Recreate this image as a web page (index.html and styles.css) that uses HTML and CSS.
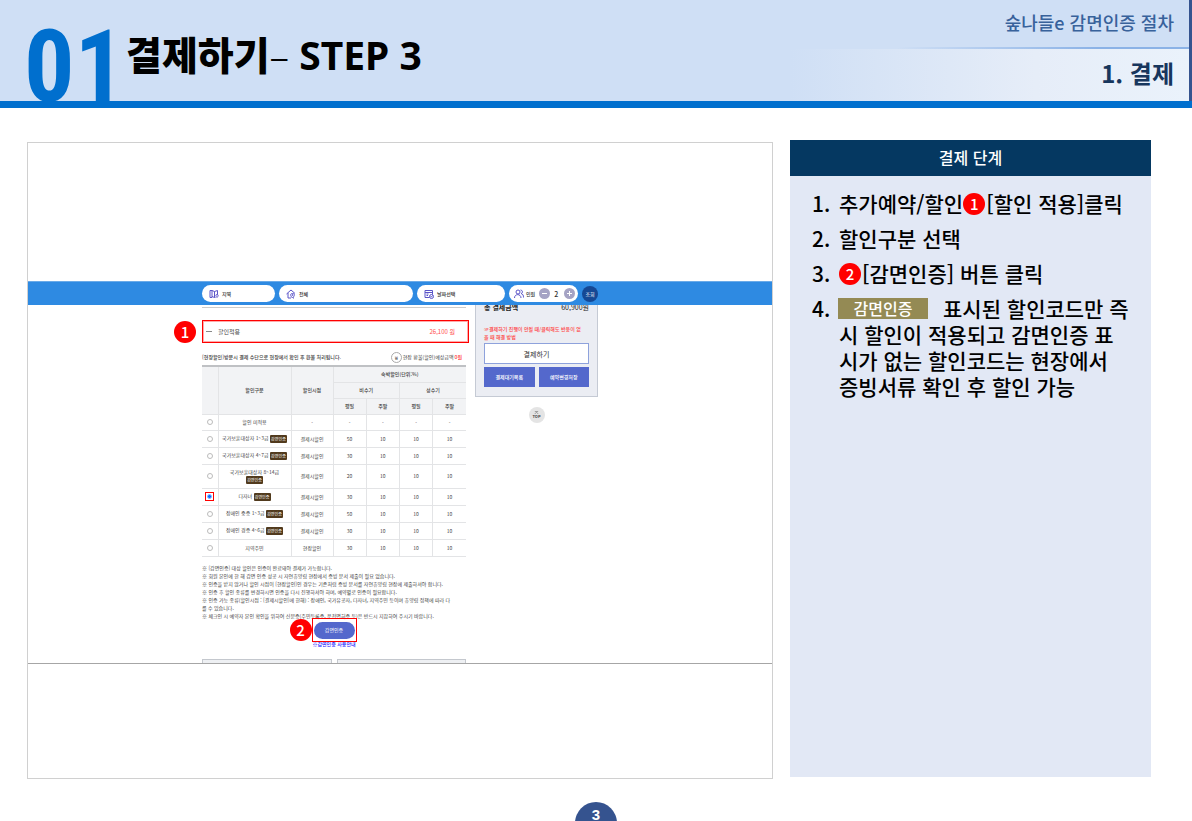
FILE: index.html
```html
<!DOCTYPE html>
<html lang="ko">
<head>
<meta charset="utf-8">
<meta name="viewport" content="width=device-width, initial-scale=1">
<title>결제하기 – STEP 3</title>
<link rel="stylesheet" href="styles.css">
</head>
<body>
<header class="header">
  <div class="chapter">01</div>
  <h1 class="title">결제하기<span class="title-step"><span class="title-dash">–</span> STEP 3</span></h1>
  <div class="crumbs">
    <p class="crumb-doc">숲나들e 감면인증 절차</p>
    <p class="crumb-section">1. 결제</p>
  </div>
</header>

<main class="main">
  <section class="frame" aria-label="결제 화면">
    <div class="site">
      <div class="search">
        <button class="pill" type="button">
          <svg class="ico" viewBox="0 0 20 20"><path d="M2 3h4v14H2zM6 3l5 2v12l-5-2M11 5l6-2v8M11 17h2"/><path d="M16 11c3 0 3 3 0 6-3-3-3-6 0-6z"/></svg>지역
        </button>
        <button class="pill" type="button">
          <svg class="ico" viewBox="0 0 20 20"><path d="M1 10l9-8 8 7M4 8v10h6M14 18h2"/><path d="M13 9c5 0 5 4 0 9-5-5-5-9 0-9z"/><circle cx="13" cy="12" r="1"/></svg>전체
        </button>
        <button class="pill" type="button">
          <svg class="ico" viewBox="0 0 20 20"><path d="M11 17H2V3h15v8M2 7h15M5 10h4M5 13h3"/><circle cx="15" cy="15" r="4"/><path d="M13 15l2 1 2-3"/></svg>날짜선택
        </button>
        <div class="pill pill-people">
          <svg class="ico" viewBox="0 0 20 20"><circle cx="8" cy="6" r="4"/><path d="M1 18c0-9 13-9 13 0M13 2c5 0 5 7 1 7 4 1 5 4 5 8"/></svg><span>인원</span>
          <button class="step" type="button" aria-label="인원 줄이기"><svg viewBox="0 0 11 11"><path d="M3 5.500h5"/></svg></button>
          <output class="count">2</output>
          <button class="step" type="button" aria-label="인원 늘리기"><svg viewBox="0 0 11 11"><path d="M3 5.500h5M5.500 3v5"/></svg></button>
        </div>
        <button class="go" type="button">조회</button>
      </div>

      <div class="content">
        <div class="left">
          <div class="discount">
            <span class="badge badge-one">1</span>
            <span class="dash"></span><span class="discount-name">할인적용</span>
            <span class="discount-sum">26,100 원</span>
          </div>
          <div class="refund">
            <b>[현장할인]방문시 결제 수단으로 현장에서 확인 후 환불 처리됩니다.</b>
            <span class="refund-sum"><span class="won">₩</span>현장 환불(할인)예상금액 <em>0원</em></span>
          </div>
          <table class="rates">
            <colgroup><col class="c-radio"><col class="c-name"><col class="c-when"><col><col><col><col></colgroup>
            <thead>
              <tr><th rowspan="3"></th><th rowspan="3">할인구분</th><th rowspan="3">할인시점</th><th colspan="4">숙박할인(단위:%)</th></tr>
              <tr><th colspan="2">비수기</th><th colspan="2">성수기</th></tr>
              <tr><th>평일</th><th>주말</th><th>평일</th><th>주말</th></tr>
            </thead>
            <tbody>
              <tr><td><input type="radio" name="rate" id="r1"></td><td><label for="r1">할인 미적용</label></td><td>-</td><td>-</td><td>-</td><td>-</td><td>-</td></tr>
              <tr><td><input type="radio" name="rate" id="r2"></td><td><label for="r2">국가보훈대상자 1~3급 <span class="tag">감면인증</span></label></td><td>결제시할인</td><td>50</td><td>10</td><td>10</td><td>10</td></tr>
              <tr><td><input type="radio" name="rate" id="r3"></td><td><label for="r3">국가보훈대상자 4~7급 <span class="tag">감면인증</span></label></td><td>결제시할인</td><td>30</td><td>10</td><td>10</td><td>10</td></tr>
              <tr class="tall"><td><input type="radio" name="rate" id="r4"></td><td><label for="r4">국가보훈대상자 8~14급<br><span class="tag">감면인증</span></label></td><td>결제시할인</td><td>20</td><td>10</td><td>10</td><td>10</td></tr>
              <tr><td><span class="picked"><input type="radio" name="rate" id="r5" checked></span></td><td><label for="r5">다자녀 <span class="tag">감면인증</span></label></td><td>결제시할인</td><td>30</td><td>10</td><td>10</td><td>10</td></tr>
              <tr><td><input type="radio" name="rate" id="r6"></td><td><label for="r6">장애인 중증 1~3급 <span class="tag">감면인증</span></label></td><td>결제시할인</td><td>50</td><td>10</td><td>10</td><td>10</td></tr>
              <tr><td><input type="radio" name="rate" id="r7"></td><td><label for="r7">장애인 경증 4~6급 <span class="tag">감면인증</span></label></td><td>결제시할인</td><td>30</td><td>10</td><td>10</td><td>10</td></tr>
              <tr><td><input type="radio" name="rate" id="r8"></td><td><label for="r8">지역주민</label></td><td>현장할인</td><td>30</td><td>10</td><td>10</td><td>10</td></tr>
            </tbody>
          </table>
          <div class="notes">
            <p>※ [감면인증] 대상 할인은 인증이 완료돼야 결제가 가능합니다.</p>
            <p>※ 회원 본인에 한 해 감면 인증 성공 시 자연휴양림 현장에서 증빙 문서 제출이 필요 없습니다.</p>
            <p>※ 인증을 받지 않거나 할인 시점이 [현장할인]인 경우는 기존처럼 증빙 문서를 자연휴양림 현장에 제출하셔야 합니다.</p>
            <p>※ 인증 후 할인 종류를 변경하시면 인증을 다시 진행하셔야 하며, 예약별로 인증이 필요합니다.</p>
            <p>※ 인증 가능 종류(할인시점 : [결제시할인]에 한해) : 장애인, 국가유공자, 다자녀, 지역주민 등이며 휴양림 정책에 따라 다<br>를 수 있습니다.</p>
            <p>※ 체크인 시 예약자 본인 확인을 위하여 신분증(주민등록증, 운전면허증 등)은 반드시 지참하여 주시기 바랍니다.</p>
          </div>
          <div class="verify">
            <div class="verify-box">
              <span class="badge badge-two">2</span>
              <button class="verify-btn" type="button">감면인증</button>
            </div>
            <a class="guide" href="#guide">※감면인증 사용안내</a>
          </div>
          <div class="cards"><span></span><span></span></div>
        </div>

        <aside class="aside">
          <div class="pay">
            <div class="total"><b>총 결제금액</b><span>60,900원</span></div>
            <p class="warn">☞결제하기 진행이 안될 때/클릭해도 반응이 없<br>을 때 해결 방법</p>
            <button class="pay-btn" type="button">결제하기</button>
            <div class="pair">
              <button type="button">결제대기목록</button>
              <button type="button">예약변경저장</button>
            </div>
          </div>
          <a class="top" href="#"><svg viewBox="0 0 6 4"><path d="M1 .5h4M1 3.500l2-2 2 2"/></svg>TOP</a>
        </aside>
      </div>
    </div>
  </section>

  <section class="guide-panel">
    <h2 class="panel-head">결제 단계</h2>
    <ol class="steps">
      <li>추가예약/할인<span class="badge">1</span>[할인 적용]클릭</li>
      <li>할인구분 선택</li>
      <li><span class="badge">2</span>[감면인증] 버튼 클릭</li>
      <li><span class="chip">감면인증</span>표시된 할인코드만 즉<br>시 할인이 적용되고 감면인증 표<br>시가 없는 할인코드는 현장에서<br>증빙서류 확인 후 할인 가능</li>
    </ol>
  </section>
</main>

<footer class="footer"><span class="page-no">3</span></footer>
</body>
</html>
```

FILE: styles.css
```css
* { box-sizing: border-box; }

body {
  margin: 0;
  min-height: 100vh;
  display: flex;
  flex-direction: column;
  overflow-x: hidden;
  background: #fff;
  color: #000;
  font-family: "Noto Sans CJK KR", "Noto Sans", sans-serif;
}

h1, h2, p, ol { margin: 0; padding: 0; }
button { font: inherit; padding: 0; border: 0; cursor: pointer; }

/* Header */
.header {
  flex: none;
  display: flex;
  height: 108px;
  border-bottom: 7px solid #006fce;
  background: #cfdff5;
}
.chapter {
  width: 98px;
  padding-left: 24px;
  color: #006fce;
  font: bold 100px/134px "Roboto Condensed", "Open Sans Condensed", "Liberation Sans Narrow", sans-serif;
}
.title {
  padding-left: 28px;
  font-size: 39px;
  line-height: 106px;
  font-weight: 900;
  white-space: nowrap;
}
.title-step { font-family: "Noto Sans", "Open Sans", sans-serif; font-weight: 700; }
.title-dash { font-weight: 300; }
.crumbs {
  flex: 1;
  display: grid;
  grid-template-rows: 49px 1fr;
  text-align: right;
  border-right: 3px solid #35538f;
}
.crumb-doc {
  padding-right: 15px;
  border-bottom: 2px solid;
  border-image: linear-gradient(90deg, transparent 62%, #8bb2e6 88%) 1;
  color: #38629b;
  font-size: 18px;
  line-height: 44px;
  font-weight: 500;
}
.crumb-section {
  padding-right: 15px;
  background: linear-gradient(90deg, #cfdff5 48%, #e6edf8 80%, #eaf2fb);
  color: #17365d;
  font-size: 24px;
  line-height: 48px;
  font-weight: 700;
}

/* Main layout */
.main {
  flex: 1;
  display: grid;
  grid-template-columns: 746fr 361fr;
  gap: 17px;
  padding: 32px 41px 25px 27px;
}
.frame {
  display: flex;
  flex-direction: column;
  margin: 2px 0 -2px;
  border: 1px solid #d0d0d0;
}
.frame::before { content: ""; flex: 139; }
.frame::after { content: ""; flex: 115; }

/* Embedded booking page */
.site {
  border-bottom: 1px solid #a6a6a6;
  color: #444;
  font-size: 5px;
  line-height: 8px;
}
.search {
  display: grid;
  grid-template-columns: 73px 134px 88px 69px 16px;
  gap: 4px;
  align-items: center;
  height: 24px;
  padding-left: 174px;
  border-top: 1px solid #6aaae8;
  background: #2e8ae2;
}
.pill {
  display: flex;
  align-items: center;
  gap: 3px;
  height: 17px;
  padding-left: 7px;
  border-radius: 9px;
  background: #fff;
  color: #333;
  font-weight: 500;
}
.ico {
  width: 10px;
  height: 10px;
  fill: none;
  stroke: #5b54c8;
  stroke-width: 2;
}
.pill-people { padding-left: 5px; gap: 2px; }
.step {
  width: 11px;
  height: 11px;
  margin-left: 2px;
  border-radius: 50%;
  background: #a5a3c4;
}
.step svg { display: block; fill: none; stroke: #fff; }
.count { width: 8px; font-size: 7px; text-align: center; }
.go {
  width: 16px;
  height: 16px;
  border-radius: 50%;
  background: #154894;
  color: #fff;
}

.content {
  display: grid;
  grid-template-columns: 264px 123px;
  gap: 9px;
  padding-left: 174px;
}
.left { padding-top: 1px; border-top: 1px solid #fff; }
.left::before {
  content: "";
  display: block;
  height: 1px;
  margin-bottom: -1px;
  background: #ccc;
}
.discount {
  position: relative;
  display: flex;
  align-items: center;
  height: 23px;
  margin: 13px -3px 0 0;
  padding: 0 13px 0 3px;
  border: 1px solid #f00;
  outline: 1px solid #ff000055;
  outline-offset: -2px;
  font-size: 6px;
}
.dash { width: 6px; height: 1px; margin-right: 6px; background: #888; }
.discount-sum { margin-left: auto; color: #ff4d4d; }
.badge {
  display: inline-flex;
  align-items: center;
  justify-content: center;
  width: 22px;
  height: 22px;
  border-radius: 50%;
  background: #f00;
  color: #fff;
  font-size: 15px;
  line-height: 22px;
  font-weight: 500;
}
.badge-one { position: absolute; left: -29px; top: 0; }
.badge-two { position: absolute; left: -23px; top: 0; }

.refund {
  display: flex;
  align-items: center;
  justify-content: space-between;
  height: 22px;
  padding: 6px 4px 0 0;
  white-space: nowrap;
}
.refund b { font-weight: 500; }
.refund-sum { display: flex; align-items: center; gap: 1px; }
.refund-sum em { color: #f33; font-style: normal; font-weight: 500; }
.won {
  width: 11px;
  height: 11px;
  border: 1px solid #aaa;
  border-radius: 50%;
  line-height: 9px;
  text-align: center;
}

.rates {
  width: 100%;
  table-layout: fixed;
  border-collapse: collapse;
  border-top: 2px solid #bfc1c4;
}
.c-radio { width: 16px; }
.c-name { width: 73px; }
.c-when { width: 42px; }
.rates th, .rates td {
  height: 16px;
  padding: 0;
  border: 1px solid #e3e4e6;
  text-align: center;
  line-height: 8px;
  white-space: nowrap;
}
.rates th { background: #f2f3f5; font-weight: 500; }
.rates td { height: 17px; }
.rates tbody tr:first-child td { height: 16px; }
.rates .tall td { height: 24px; }
.rates tr > :first-child { border-left: 0; }
.rates tr > :last-child { border-right: 0; }
.rates input {
  display: block;
  appearance: none;
  width: 6px;
  height: 6px;
  margin: 0 auto;
  border: 1px solid #bbb;
  border-radius: 50%;
  background: #fff;
}
.rates input:checked { border-color: #8bb8ff; background: #0a6cff; }
.picked {
  display: block;
  width: 9px;
  margin: 0 auto;
  padding: 1px 0;
  border: 1px solid #f00;
}
.picked input { width: 5px; height: 5px; }
.tag {
  display: inline-block;
  width: 17px;
  height: 8px;
  border-radius: 1px;
  background: #513a1d;
  color: #fff;
  font-size: 4px;
  line-height: 8px;
  vertical-align: middle;
}

.notes { padding-top: 7px; white-space: nowrap; }
.verify { display: flex; flex-direction: column; align-items: center; }
.verify-box {
  position: relative;
  margin-top: -2px;
  padding: 3px 1px 2px;
  border: 1px solid #f00;
}
.verify-btn {
  display: block;
  width: 41px;
  height: 17px;
  border-radius: 9px;
  background: #5468cc;
  color: #fff;
}
.guide { margin-top: -2px; color: #22f; text-decoration: none; font-weight: 500; }
.cards { display: grid; grid-template-columns: 1fr 1fr; gap: 5px; margin-top: 11px; }
.cards span { height: 4px; border: 1px solid #c4c8ce; border-bottom: 0; background: #eef0f3; }

.pay {
  height: 92px;
  padding: 0 8px;
  border: 1px solid #c5cad4;
  border-top: 0;
  background: #ebedf3;
}
.total {
  display: flex;
  align-items: flex-end;
  justify-content: space-between;
  height: 6px;
  overflow: hidden;
  color: #222;
  font-size: 7px;
}
.warn { padding-top: 14px; color: #f44; font-weight: 500; white-space: nowrap; }
.pay-btn {
  display: block;
  width: 100%;
  height: 21px;
  margin-top: 2px;
  border: 1px solid #8ea2dc;
  background: #fff;
  color: #333;
  font-size: 7px;
}
.pair { display: grid; grid-template-columns: 1fr 1fr; gap: 4px; margin-top: 3px; }
.pair button { height: 20px; background: #5468cc; color: #fff; font-weight: 500; }
.top {
  display: flex;
  flex-direction: column;
  align-items: center;
  justify-content: center;
  width: 16px;
  height: 16px;
  margin: 10px auto 0;
  border-radius: 50%;
  background: #e4e4e4;
  color: #444;
  font-size: 4px;
  line-height: 5px;
  font-weight: 700;
  text-decoration: none;
}
.top svg { width: 5px; fill: none; stroke: #888; }

/* Guide panel */
.guide-panel { background: #e2e8f5; }
.panel-head {
  height: 36px;
  background: #053861;
  color: #fff;
  font-size: 16px;
  line-height: 34px;
  font-weight: 500;
  text-align: center;
}
.steps {
  display: flex;
  flex-direction: column;
  gap: 9px;
  padding: 14px 0 0 49px;
  font-size: 21px;
  line-height: 26px;
  font-weight: 500;
  list-style: none;
  counter-reset: step;
  white-space: nowrap;
}
.steps li { counter-increment: step; }
.steps li::before {
  content: counter(step) ".";
  display: inline-block;
  width: 27px;
  margin-left: -27px;
}
.steps .badge { vertical-align: top; margin: 3px 1px 0 0; }
.chip {
  display: inline-block;
  width: 90px;
  height: 21px;
  margin: 3px 15px 0 -1px;
  background: #948a54;
  color: #fff;
  font-size: 16px;
  line-height: 20px;
  text-align: center;
  vertical-align: top;
}

/* Footer */
.footer {
  flex: none;
  display: flex;
  justify-content: center;
  height: 19px;
  overflow: hidden;
}
.page-no {
  width: 42px;
  height: 42px;
  border-radius: 50%;
  background: #35538f;
  color: #fff;
  font: bold 15px/26px "Liberation Sans", sans-serif;
  text-align: center;
}
```
